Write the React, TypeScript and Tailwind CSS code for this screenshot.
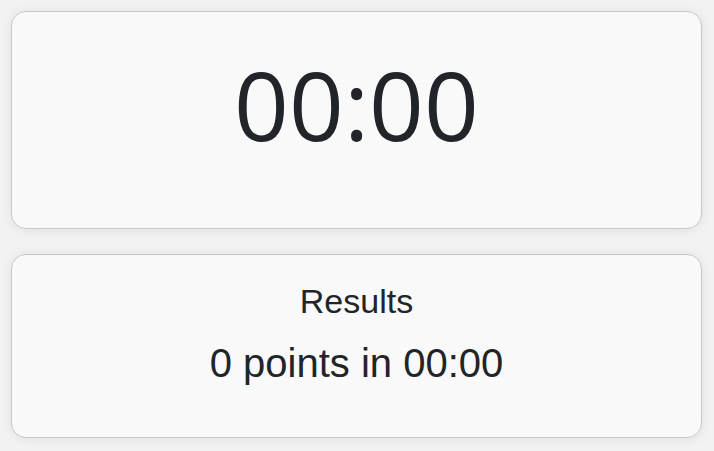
export default function App() {
  return (
    <div className="min-h-[451px] w-[714px] bg-[#f2f2f2] pt-[11px] pb-[13px] pl-[11px] pr-[12px] flex flex-col gap-[25px]">
      <div className="h-[218px] rounded-[15px] border border-[#c8c8c8] bg-[#f9f9f9] shadow-[0_1px_12px_rgba(0,0,0,0.08)] flex flex-col items-center pt-[44px]">
        <div className="text-[96px] leading-none text-[#212529]" style={{ fontFamily: '"Open Sans", "Noto Sans", sans-serif' }}>
          00:00
        </div>
      </div>
      <div className="h-[184px] rounded-[15px] border border-[#c8c8c8] bg-[#f9f9f9] shadow-[0_1px_12px_rgba(0,0,0,0.08)] flex flex-col items-center pt-[29px] gap-[25px] text-[#212529]" style={{ fontFamily: '"Liberation Sans", Arial, sans-serif' }}>
        <div className="text-[34px] leading-none">Results</div>
        <div className="text-[40px] leading-none">0 points in 00:00</div>
      </div>
    </div>
  );
}
